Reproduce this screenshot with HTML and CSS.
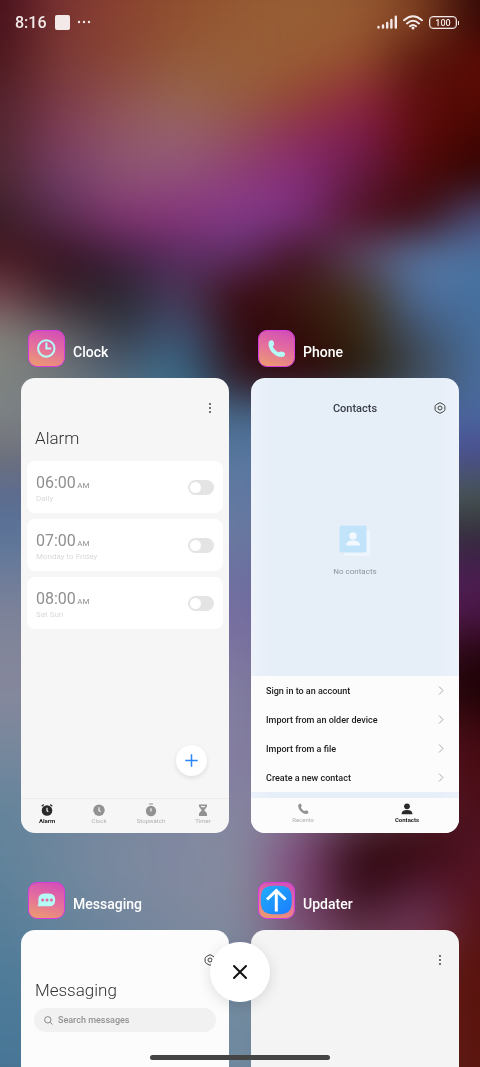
FILE: index.html
```
<!DOCTYPE html>
<html lang="en">
<head>
	<title>Recent apps</title>
	<meta charset="utf-8">
	<meta name="viewport" content="width=device-width, initial-scale=1">
	<link rel="stylesheet" href="styles.css">
</head>
<body>

<svg class="defs" aria-hidden="true">
	<defs>
		<linearGradient id="iconFill" x1="0.3" y1="1" x2="0.6" y2="0">
			<stop offset="0" stop-color="#eb9a72"/>
			<stop offset="0.5" stop-color="#e5709c"/>
			<stop offset="1" stop-color="#d451b4"/>
		</linearGradient>
		<linearGradient id="updateFill" x1="0" y1="0" x2="1" y2="1">
			<stop offset="0" stop-color="#20adfa"/>
			<stop offset="1" stop-color="#1b7dff"/>
		</linearGradient>
		<symbol id="handset" viewBox="0 0 24 24">
			<path d="M2.500 4.500C3 .8 8 0 9 3.600C9.600 6 9.200 7.500 7.700 8.800C9.200 11.900 11.700 14.500 14.900 16.100C16.500 14.800 19 14.700 21.300 15.800C24 17.200 23 20.800 20.300 21.600C13 23.400 1.700 14.500 2.500 4.500Z"/>
		</symbol>
		<symbol id="gear" viewBox="0 0 12 12">
			<path d="M5 1.100Q6 .5 7 1.100L9.900 2.800Q10.900 3.300 10.900 4.500V7.500Q10.900 8.700 9.900 9.200L7 10.900Q6 11.500 5 10.900L2.100 9.200Q1.100 8.700 1.100 7.500V4.500Q1.100 3.300 2.100 2.800Z"/>
			<circle cx="6" cy="6" r="2"/>
		</symbol>
	</defs>
</svg>

<div class="wallpaper">
	<i></i><i></i><i></i><i></i><i></i><i></i><i></i><i></i><i></i>
	<i></i><i></i><i></i><i></i><i></i><i></i><i></i><i></i><i></i>
	<i></i><i></i><i></i><i></i><i></i><i></i><i></i><i></i><i></i>
</div>

<header class="status">
	<span class="time">8:16</span>
	<span class="notice"></span>
	<svg class="more" width="14" height="4" viewBox="0 0 14 4"><circle cx="2" cy="2" r="1.200"/><circle cx="7" cy="2" r="1.200"/><circle cx="12" cy="2" r="1.200"/></svg>
	<svg class="signal" width="21" height="14" viewBox="0 0 21 14">
		<path d="M1.500 12V12.500M6 10.500V12.500M10.200 8V12.500M14.400 5V12.500M18.800 1.700V12.500"/>
	</svg>
	<svg class="wifi" width="20" height="15" viewBox="0 0 20 15">
		<path d="M1 5.200Q10-2.800 19 5.200M4 8.400Q10 3 16 8.400M7 11.300Q10 8.600 13 11.300"/>
		<circle cx="10" cy="13" r="1.500"/>
	</svg>
	<span class="battery">100</span>
</header>

<main class="tasks">

	<section class="task">
		<header>
			<svg class="app-icon" viewBox="0 0 37 37">
				<rect class="tile" x="0.500" y="0.500" width="36" height="36" rx="8.500"/>
				<circle class="ink" cx="18.300" cy="18.500" r="8.200"/>
				<path class="ink" d="M18.400 12.500V18.600H23.200"/>
			</svg>
			<h2>Clock</h2>
		</header>
		<div class="card clock">
			<div class="toolbar">
				<button class="icon-btn" aria-label="More options"><svg class="dots" width="12" height="12" viewBox="0 0 12 12"><circle cx="6" cy="2" r="0.900"/><circle cx="6" cy="6" r="0.900"/><circle cx="6" cy="10" r="0.900"/></svg></button>
			</div>
			<h1>Alarm</h1>
			<div class="alarms">
				<label class="alarm">
					<span><span class="hour">06:00</span> <small>AM</small><em>Daily</em></span>
					<input type="checkbox">
				</label>
				<label class="alarm">
					<span><span class="hour">07:00</span> <small>AM</small><em>Monday to Friday</em></span>
					<input type="checkbox">
				</label>
				<label class="alarm">
					<span><span class="hour">08:00</span> <small>AM</small><em>Sat Sun</em></span>
					<input type="checkbox">
				</label>
			</div>
			<button class="add" aria-label="Add alarm"><svg width="13" height="13" viewBox="0 0 13 13"><path d="M6.500 .3V12.700M.3 6.500H12.700"/></svg></button>
			<nav class="tabs">
				<a href="#" class="active">
					<svg width="14" height="14" viewBox="0 0 14 14"><circle cx="7" cy="7.500" r="5.300"/><path class="line" d="M1.700 3.300L3.800 1.500M12.300 3.300L10.200 1.500"/><path class="hand" d="M7 4.800V7.700L8.300 8.700"/></svg>
					Alarm
				</a>
				<a href="#">
					<svg width="14" height="14" viewBox="0 0 14 14"><circle cx="7" cy="7.200" r="5.700"/><path class="hand" d="M7 4.200V7.500L8.600 8.700"/></svg>
					Clock
				</a>
				<a href="#">
					<svg width="14" height="14" viewBox="0 0 14 14"><circle cx="7" cy="8" r="5.200"/><path class="line" d="M5 1H9"/><path class="hand" d="M7 5.300V8.600"/></svg>
					Stopwatch
				</a>
				<a href="#">
					<svg width="14" height="14" viewBox="0 0 14 14"><path d="M3 1.500H11V3.500L8.300 7.200L11 10.500V13H3V10.500L5.700 7.200L3 3.500Z"/><path class="gap" d="M4.700 3H9.300L8.500 4.200H5.500Z"/></svg>
					Timer
				</a>
			</nav>
		</div>
	</section>

	<section class="task">
		<header>
			<svg class="app-icon" viewBox="0 0 37 37">
				<rect class="tile" x="0.500" y="0.500" width="36" height="36" rx="8.500"/>
				<use class="solid" href="#handset" x="8.500" y="9.300" width="19.500" height="19.500"/>
			</svg>
			<h2>Phone</h2>
		</header>
		<div class="card phone">
			<div class="toolbar">
				<h3>Contacts</h3>
				<button class="icon-btn" aria-label="Settings"><svg class="gear" width="12" height="12"><use href="#gear"/></svg></button>
			</div>
			<div class="empty">
				<svg width="32" height="32" viewBox="0 0 32 32">
					<rect x="5" y="5" width="26" height="26" rx="2" fill="#eff6fe"/>
					<rect x="0.500" y="0.500" width="27" height="27" rx="2" fill="#bfe3fb"/>
					<circle cx="14" cy="11" r="3.700" fill="#f4faff"/>
					<path d="M7 20.500Q7 15.500 14 15.500T21 20.500Z" fill="#f4faff"/>
				</svg>
				<p>No contacts</p>
			</div>
			<ul class="actions">
				<li><a href="#">Sign in to an account <svg width="6" height="9" viewBox="0 0 6 9"><path d="M1 .5L5 4.500L1 8.500"/></svg></a></li>
				<li><a href="#">Import from an older device <svg width="6" height="9" viewBox="0 0 6 9"><path d="M1 .5L5 4.500L1 8.500"/></svg></a></li>
				<li><a href="#">Import from a file <svg width="6" height="9" viewBox="0 0 6 9"><path d="M1 .5L5 4.500L1 8.500"/></svg></a></li>
				<li><a href="#">Create a new contact <svg width="6" height="9" viewBox="0 0 6 9"><path d="M1 .5L5 4.500L1 8.500"/></svg></a></li>
			</ul>
			<nav class="tabs">
				<a href="#">
					<svg width="14" height="14" viewBox="0 0 14 14"><use href="#handset" x="1" y="1" width="12" height="12"/></svg>
					Recents
				</a>
				<a href="#" class="active">
					<svg width="14" height="14" viewBox="0 0 14 14"><circle cx="7" cy="4.300" r="2.900"/><path d="M1.500 12.300Q1.500 8 7 8T12.500 12.300Z"/></svg>
					Contacts
				</a>
			</nav>
		</div>
	</section>

	<section class="task">
		<header>
			<svg class="app-icon" viewBox="0 0 37 37">
				<rect class="tile" x="0.500" y="0.500" width="36" height="36" rx="8.500"/>
				<path class="solid" d="M16.500 11.500H21Q27.200 11.500 27.200 18T21 24.300H10Q9.300 23.800 10.400 22.300Q10.400 21.500 10.300 18Q10.300 11.500 16.500 11.500Z"/>
				<g fill="#df6a9f"><circle cx="14.600" cy="18" r="1.500"/><circle cx="19" cy="18" r="1.500"/><circle cx="23.400" cy="18" r="1.500"/></g>
			</svg>
			<h2>Messaging</h2>
		</header>
		<div class="card messaging">
			<div class="toolbar">
				<button class="icon-btn" aria-label="Settings"><svg class="gear" width="12" height="12"><use href="#gear"/></svg></button>
			</div>
			<h1>Messaging</h1>
			<label class="search">
				<svg width="9" height="9" viewBox="0 0 9 9"><circle cx="3.800" cy="3.800" r="3.200"/><path d="M6.200 6.200L8.500 8.500"/></svg>
				<input type="text" placeholder="Search messages" aria-label="Search messages">
			</label>
		</div>
	</section>

	<section class="task">
		<header>
			<svg class="app-icon" viewBox="0 0 37 37">
				<rect class="tile" x="0.500" y="0.500" width="36" height="36" rx="8.500"/>
				<path d="M18.500 3.800C30.500 3.800 33.800 6.500 33.800 18S30.500 32.300 18.500 32.300S2.800 29.500 2.800 18S6.500 3.800 18.500 3.800Z" fill="url(#updateFill)"/>
				<path class="arrow" d="M18.300 29.500V8.500M9 17.500L18.300 8.500L27.600 17.500"/>
			</svg>
			<h2>Updater</h2>
		</header>
		<div class="card updater">
			<div class="toolbar">
				<button class="icon-btn" aria-label="More options"><svg class="dots" width="12" height="12" viewBox="0 0 12 12"><circle cx="6" cy="2" r="0.900"/><circle cx="6" cy="6" r="0.900"/><circle cx="6" cy="10" r="0.900"/></svg></button>
			</div>
		</div>
	</section>

</main>

<button class="close" aria-label="Close all"><svg width="16" height="16" viewBox="0 0 16 16"><path d="M2 2L14 14M14 2L2 14"/></svg></button>
<div class="home-bar"></div>

</body>
</html>
```
FILE: styles.css
```
* {
box-sizing: border-box;
margin: 0;
padding: 0;
}

body {
display: flex;
flex-direction: column;
height: 100vh;
overflow: hidden;
background: #3a0a12;
color: #fff;
font-family: Roboto, "Liberation Sans", sans-serif;
font-size: 14px;
}

a {
color: inherit;
text-decoration: none;
}

button {
border: 0;
background: none;
cursor: pointer;
}

svg {
display: block;
flex: none;
}

.defs {
position: absolute;
width: 0;
height: 0;
}

/* wallpaper: blurred colour bands, reaching past the window so the edges stay solid */

.wallpaper {
position: fixed;
inset: -40px -12.5vw;
display: flex;
flex-direction: column;
filter: blur(20px);
}

.wallpaper i {
flex: 1;
background: linear-gradient(90deg, var(--l) 14%, var(--m) 47%, var(--m) 53%, var(--r) 87%);
}

.wallpaper i:first-child, .wallpaper i:last-child {
flex: 2;
}

.wallpaper i:nth-child(1) {background: linear-gradient(90deg, #450f1b, #450f1b, #7c3433, #8a4230, #91502f, #965a33, #985e34, #965a32, #7e3f20, #300404, #300404);}
.wallpaper i:nth-child(2) {background: linear-gradient(90deg, #4a151c, #4a151c, #7c3a36, #8a4636, #945a3a, #98603a, #985c34, #964f2e, #55150c, #5c0a03, #5c0a03);}
.wallpaper i:nth-child(3) {background: linear-gradient(90deg, #50202a, #50202a, #7c3a48, #905250, #966450, #965c40, #944432, #8f2840, #5c0c0c, #560902, #560902);}
.wallpaper i:nth-child(4) {background: linear-gradient(90deg, #50252e, #50252e, #7e3c5c, #905868, #966070, #924c5c, #8c2c5c, #7c1c50, #5c0a06, #400502, #400502);}
.wallpaper i:nth-child(5) {background: linear-gradient(90deg, #4c262e, #4c262e, #703c68, #8c5074, #90507a, #8c3c78, #852c7c, #601a40, #4a0807, #300403, #300403);}
.wallpaper i:nth-child(6) {background: linear-gradient(90deg, #381c24, #381c24, #582c50, #803470, #86347a, #84388a, #78307c, #50101e, #3a0a10, #4e5080, #4e5080);}
.wallpaper i:nth-child(7) {background: linear-gradient(90deg, #481820, #481820, #34121e, #402040, #5a2c60, #5c3068, #40101c, #5a4a68, #5878a4, #4a72a0, #4a72a0);}
.wallpaper i:nth-child(8) {background: linear-gradient(90deg, #784850, #784850, #38202a, #25252b, #4a3c60, #380608, #3c1812, #403018, #5070a0, #44709f, #44709f);}
.wallpaper i:nth-child(9) {background: linear-gradient(90deg, #86867e, #86867e, #68666a, #343a48, #405a7c, #300810, #300a08, #35260e, #40506a, #46709f, #46709f);}
.wallpaper i:nth-child(10) {background: linear-gradient(90deg, #80847f, #80847f, #70767a, #506478, #357090, #301018, #340408, #241a0c, #404a50, #4a6ea0, #4a6ea0);}
.wallpaper i:nth-child(11) {--l: #7c8286; --m: #45688a; --r: #4a68a0;}
.wallpaper i:nth-child(12) {--l: #707078; --m: #5878a0; --r: #4a4a90;}
.wallpaper i:nth-child(13) {--l: #5a6a90; --m: #6078a2; --r: #485850;}
.wallpaper i:nth-child(14) {--l: #5a7499; --m: #6a7aa0; --r: #302a38;}
.wallpaper i:nth-child(15) {--l: #6c7c99; --m: #6c70a0; --r: #481c50;}
.wallpaper i:nth-child(16) {--l: #7c8299; --m: #746ea0; --r: #4e1648;}
.wallpaper i:nth-child(17) {--l: #82869a; --m: #7c74a0; --r: #280410;}
.wallpaper i:nth-child(18) {--l: #86889c; --m: #807ca0; --r: #1c0002;}
.wallpaper i:nth-child(19) {--l: #7c879c; --m: #827ea0; --r: #400810;}
.wallpaper i:nth-child(20) {--l: #70869c; --m: #847ea0; --r: #4a0a12;}
.wallpaper i:nth-child(21) {--l: #64849b; --m: #8585a0; --r: #4a0f1a;}
.wallpaper i:nth-child(22) {background: linear-gradient(90deg, #60839b, #60839b, #70879d, #7c8a9f, #8089a0, #858b9f, #854a80, #300810, #34060c, #551526, #551526);}
.wallpaper i:nth-child(23) {background: linear-gradient(90deg, #5c8099, #5c8099, #6a869c, #78889f, #80889f, #858c9e, #804878, #300810, #56203c, #56101c, #56101c);}
.wallpaper i:nth-child(24) {background: linear-gradient(90deg, #567e99, #567e99, #65839b, #72869c, #7c889d, #80899d, #7c4c74, #603048, #743c60, #54100e, #54100e);}
.wallpaper i:nth-child(25) {--l: #507c99; --m: #788a9f; --r: #5a120c;}
.wallpaper i:nth-child(26) {--l: #4c7a98; --m: #738ba0; --r: #5a120c;}
.wallpaper i:nth-child(27) {--l: #487696; --m: #708aa0; --r: #5c140e;}

/* status bar */

.status {
position: relative;
display: flex;
flex: none;
align-items: center;
height: 44px;
padding: 0 23px 0 15px;
color: #f3e9e9;
}

.time {
font-size: 16px;
font-weight: 500;
}

.notice {
width: 15px;
height: 15px;
margin: 0 7px 0 8px;
border-radius: 2px;
background: #f3e9e9;
}

.more, .wifi circle {
fill: #f3e9e9;
}

.signal, .wifi {
fill: none;
stroke: #f3e9e9;
stroke-width: 2;
stroke-linecap: round;
}

.signal {
stroke-width: 2.4;
margin-left: auto;
}

.wifi {
margin: 0 6px 0 5px;
}

.wifi circle {
stroke: none;
}

.battery {
position: relative;
width: 28px;
height: 13px;
border: 1px solid #f3e9e9;
border-radius: 4px;
box-shadow: inset 0 0 0 1px rgba(243,233,233,0.3);
font-size: 9px;
font-weight: 500;
line-height: 12px;
text-align: center;
}

.battery::after {
content: "";
position: absolute;
right: -3px;
top: 4px;
width: 1px;
height: 4px;
background: #f3e9e9;
}

/* task grid */

.tasks {
position: relative;
flex: 1;
display: grid;
grid-template-columns: 1fr 1fr;
grid-template-rows: 503px minmax(0, 1fr);
gap: 49px 22px;
min-height: 0;
padding: 286px 21px 0;
}

.task {
display: flex;
flex-direction: column;
}

.task > header {
display: flex;
flex: none;
align-items: center;
gap: 8px;
height: 37px;
margin-bottom: 11px;
padding-left: 7px;
}

.task h2 {
padding-top: 6px;
font-size: 14px;
font-weight: 500;
}

.app-icon {
width: 37px;
height: 37px;
}

.tile {
fill: url(#iconFill);
stroke: #d63be0;
}

.ink {
fill: none;
stroke: #b5fbf6;
stroke-width: 2;
}

.solid {
fill: #b5fbf6;
}

.arrow {
fill: none;
stroke: #fff;
stroke-width: 3;
}

.card {
flex: 1;
display: flex;
flex-direction: column;
min-height: 0;
border-radius: 14px;
background: #f6f6f6;
color: #333;
overflow: hidden;
}

.task:nth-child(n+3) .card {
border-radius: 14px 14px 0 0;
}

.toolbar {
display: flex;
flex: none;
align-items: center;
justify-content: flex-end;
position: relative;
height: 24px;
margin-top: 18px;
padding-right: 13px;
}

.toolbar h3 {
position: absolute;
left: 0;
right: 0;
color: #3c4046;
font-size: 11px;
font-weight: 500;
text-align: center;
}

.icon-btn {
position: relative;
}

.dots {
fill: #333;
}

.gear {
fill: none;
stroke: #444;
}

.card h1 {
padding-left: 14px;
font-size: 17px;
font-weight: 300;
line-height: 24px;
margin-top: 6px;
}

/* clock */

.alarms {
display: grid;
gap: 6px;
margin: 11px 6px 0;
}

.alarm {
display: flex;
align-items: center;
justify-content: space-between;
height: 52px;
padding: 0 9px;
border-radius: 8px;
background: #fff;
color: #8f8f8f;
line-height: 18px;
}

.hour {
font-size: 16px;
}

.alarm > span {
padding-top: 2px;
}

.alarm small {
margin-left: -2px;
font-size: 8px;
}

.alarm em {
display: block;
color: #d9d9d9;
font-size: 8px;
font-style: normal;
line-height: 8px;
}

.alarm input {
-webkit-appearance: none;
appearance: none;
width: 26px;
height: 15px;
padding: 2px;
border-radius: 8px;
background: #e4e4e4;
}

.alarm input::before {
content: "";
display: block;
width: 11px;
height: 11px;
border-radius: 50%;
background: #fff;
}

.alarm input:checked {
background: #2a7fff;
}

.alarm input:checked::before {
margin-left: auto;
}

.add {
display: grid;
place-items: center;
width: 31px;
height: 31px;
margin: auto 22px 22px auto;
border-radius: 50%;
background: #fff;
box-shadow: 0 2px 5px rgba(0,0,0,0.1);
}

.add path {
stroke: #2a85f5;
stroke-width: 1.5;
}

.tabs {
display: flex;
flex: none;
height: 35px;
padding-top: 4px;
}

.clock .tabs {
border-top: 1px solid #ececec;
}

.tabs a {
flex: 1;
display: flex;
flex-direction: column;
align-items: center;
color: #b0b0b0;
font-size: 6px;
line-height: 8px;
fill: #929292;
}

.tabs a.active {
color: #222;
font-weight: 700;
fill: #2a2a2a;
}

.tabs .line, .tabs .hand {
fill: none;
stroke: #929292;
stroke-width: 1.2;
}

.tabs .active .line {
stroke: #2a2a2a;
}

.tabs .hand {
stroke: #f6f6f6;
}

.tabs .gap {
fill: #f6f6f6;
}

/* phone */

.phone {
background: linear-gradient(90deg, #edf2fa, #e6eef8 10%, #e6eef8 90%, #edf2fa);
}

.empty {
flex: 1;
display: flex;
flex-direction: column;
align-items: center;
justify-content: center;
gap: 10px;
padding-top: 6px;
color: #8d949c;
font-size: 8px;
line-height: 10px;
}

.empty svg {
opacity: 0.9;
}

.actions {
margin-bottom: 6px;
background: #fcfcfc;
list-style: none;
}

.actions a {
display: flex;
align-items: center;
justify-content: space-between;
height: 29px;
padding: 0 15px;
color: #1c1c1c;
font-size: 9px;
font-weight: 500;
}

.actions path {
fill: none;
stroke: #aaa;
}

.phone .tabs {
background: #fcfcfc;
}

/* messaging */

.messaging {
background: #fcfcfc;
}

.search {
display: flex;
flex: none;
align-items: center;
gap: 5px;
height: 24px;
margin: 6px 13px 0;
padding: 0 10px;
border-radius: 12px;
background: #f1f1f1;
}

.search svg {
fill: none;
stroke: #888;
}

.search input {
flex: 1;
min-width: 0;
border: 0;
outline: 0;
background: none;
font: 500 9px Roboto, "Liberation Sans", sans-serif;
}

.search input::placeholder {
color: #929292;
}

.updater {
background: #f4f4f4;
}

/* floating controls */

.close {
position: fixed;
left: 50%;
bottom: 65px;
display: grid;
place-items: center;
width: 60px;
height: 60px;
margin-left: -30px;
border-radius: 50%;
background: #fff;
box-shadow: 0 3px 14px rgba(0,0,0,0.12);
}

.close path {
stroke: #111;
stroke-width: 2;
stroke-linecap: round;
}

.home-bar {
position: fixed;
left: 50%;
bottom: 7px;
width: 180px;
height: 5px;
margin-left: -90px;
border-radius: 3px;
background: #444;
}
```
